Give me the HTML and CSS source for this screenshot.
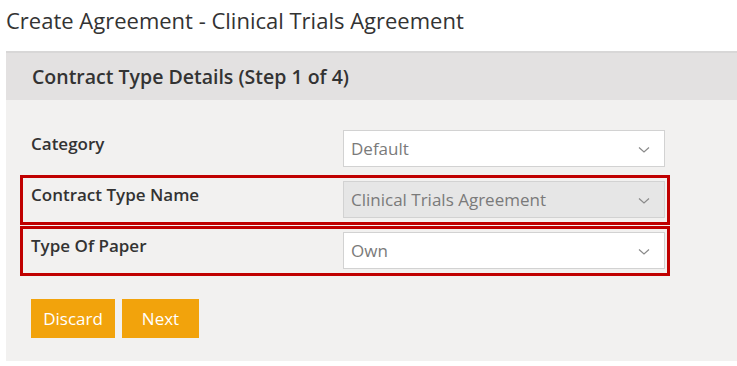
FILE: index.html
```html
<!DOCTYPE html>
<html lang="en">
<head>
    <meta charset="UTF-8">
    <title>Create Agreement</title>
    <link rel="stylesheet" href="styles.css">
</head>
<body>
    <h1 class="page-title">Create Agreement - Clinical Trials Agreement</h1>

    <div class="panel">
        <div class="panel-header">Contract Type Details (Step 1 of 4)</div>

        <div class="panel-body">
            <div class="form-row">
                <label class="form-label">Category</label>
                <div class="select-box">
                    <span>Default</span>
                    <svg class="chevron" width="12" height="8" viewBox="0 0 12 8"><polyline points="1,1.5 6,6 11,1.5" fill="none" stroke="#8a8a8a" stroke-width="1.2"/></svg>
                </div>
            </div>

            <div class="form-row highlighted">
                <label class="form-label">Contract Type Name</label>
                <div class="select-box disabled">
                    <span>Clinical Trials Agreement</span>
                    <svg class="chevron" width="12" height="8" viewBox="0 0 12 8"><polyline points="1,1.5 6,6 11,1.5" fill="none" stroke="#8a8a8a" stroke-width="1.2"/></svg>
                </div>
            </div>

            <div class="form-row highlighted">
                <label class="form-label">Type Of Paper</label>
                <div class="select-box">
                    <span>Own</span>
                    <svg class="chevron" width="12" height="8" viewBox="0 0 12 8"><polyline points="1,1.5 6,6 11,1.5" fill="none" stroke="#8a8a8a" stroke-width="1.2"/></svg>
                </div>
            </div>

            <!-- botões -->
            <div class="actions">
                <button class="btn btn-discard">Discard</button>
                <button class="btn btn-next">Next</button>
            </div>
        </div>
    </div>
</body>
</html>
```

FILE: styles.css
```css
body {
    margin: 0;
    padding: 0;
    background-color: #ffffff;
    font-family: "Open Sans", "Noto Sans", sans-serif;
    color: #333333;
}

.page-title {
    margin: 0;
    padding: 5px 0 0 6px;
    height: 51px;
    box-sizing: border-box;
    font-size: 22px;
    line-height: 30px;
    font-weight: normal;
    color: #333333;
}

.panel {
    margin-left: 6px;
    background-color: #f2f1f0;
    padding-bottom: 23px;
}

.panel-header {
    border-top: 2px solid #d8d7d7;
    background-color: #e3e1e1;
    height: 47px;
    line-height: 47px;
    padding-left: 26px;
    font-size: 19.5px;
    font-weight: 600;
    color: #333333;
}

.panel-body {
    padding: 24px 0 0 14px;
}

.form-row {
    display: flex;
    align-items: flex-start;
    box-sizing: border-box;
    width: 650px;
    height: 50px;
    padding: 3px 2px 0 8px;
    border: 3px solid transparent;
}

.form-row.highlighted {
    border-color: #c00000;
}

.form-row + .form-row {
    margin-top: 1px;
}

.form-label {
    width: 312px;
    flex-shrink: 0;
    padding-top: 2px;
    font-size: 17px;
    line-height: 24px;
    font-weight: 600;
    color: #333333;
}

.select-box {
    display: flex;
    align-items: center;
    justify-content: space-between;
    box-sizing: border-box;
    width: 322px;
    height: 37px;
    padding: 0 14px 0 7px;
    background-color: #ffffff;
    border: 1px solid #d2d2d2;
    font-size: 17px;
    color: #7a7a7a;
}

.select-box.disabled {
    background-color: #e6e6e6;
}

.chevron {
    margin-top: 3px;
}

.actions {
    display: flex;
    gap: 7px;
    margin: 23px 0 0 11px;
}

.btn {
    height: 39px;
    border: none;
    background-color: #f2a30c;
    color: #ffffff;
    font-family: "Open Sans", "Noto Sans", sans-serif;
    font-size: 17px;
    padding: 0;
    cursor: pointer;
}

.btn-discard {
    width: 84px;
}

.btn-next {
    width: 77px;
}
```
